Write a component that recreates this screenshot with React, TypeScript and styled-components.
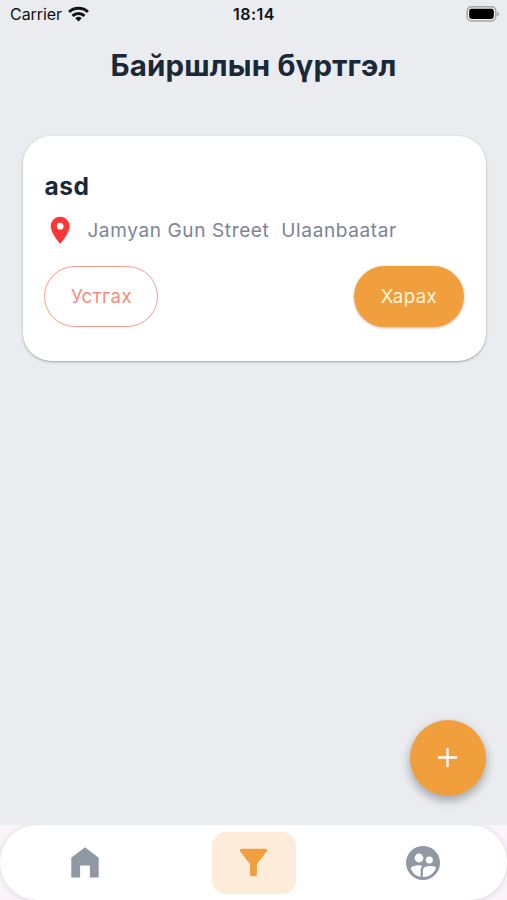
import React from "react";
import styled, { createGlobalStyle } from "styled-components";
import { MdFilterAlt, MdLocationOn } from "react-icons/md";

const GlobalStyle = createGlobalStyle`
  * { box-sizing: border-box; }
  body { margin: 0; background: #eaecef; }
  button { font: inherit; border: 0; background: none; padding: 0; cursor: pointer; }
  svg { display: block; }
`;

const Screen = styled.div`
  width: 507px;
  height: 900px;
  display: flex;
  flex-direction: column;
  overflow: hidden;
  background: #eaecef;
  color: #1b2838;
  font-family: Inter, "Noto Sans", sans-serif;
`;

const StatusBar = styled.header`
  height: 28px;
  flex: none;
  display: grid;
  grid-template-columns: 1fr auto 1fr;
  align-items: center;
  padding: 0 8px 0 10px;
  color: #111214;
  font-size: 16px;
  line-height: 28px;
`;

const Carrier = styled.div`
  display: flex;
  align-items: center;
  gap: 6px;
  letter-spacing: -0.05px;
`;

const Clock = styled.time`
  font-weight: 600;
  letter-spacing: 0.5px;
  margin-right: 1px;
`;

const Battery = styled.div`
  justify-self: end;
`;

const Title = styled.h1`
  margin: 17px 0 0;
  height: 40px;
  line-height: 40px;
  text-align: center;
  font-size: 29.5px;
  font-weight: 700;
  letter-spacing: 0.15px;
`;

const Content = styled.main`
  flex: 1;
  display: flex;
  flex-direction: column;
  padding: 51px 21.5px 29px 22.5px;
`;

const Card = styled.article`
  height: 225px;
  border-radius: 28px;
  background: #fff;
  padding: 34px 22px 0;
  box-shadow: 0 1px 3px rgba(35, 45, 55, 0.28), 0 1px 1px rgba(35, 45, 55, 0.12);
`;

const CardTitle = styled.h2`
  margin: 0;
  font-size: 24.5px;
  line-height: 32px;
  font-weight: 700;
  letter-spacing: 0.5px;
`;

const Address = styled.div`
  display: flex;
  align-items: center;
  height: 57px;
  gap: 11px;
  color: #7e8494;
  font-size: 19px;
  letter-spacing: 0.63px;
  white-space: pre;
  svg { color: #fd3737; margin-left: -0.5px; }
  span { padding-bottom: 1px; }
`;

const Actions = styled.div`
  display: flex;
  justify-content: space-between;
  margin: 7px 0 0 -0.5px;
`;

const ActionButton = styled.button<{ $filled?: boolean }>`
  && {
    width: ${({ $filled }) => ($filled ? 110 : 114)}px;
    height: 61px;
    padding: 0 0 2px 1px;
    border-radius: 31px;
    font-size: 18.5px;
    letter-spacing: 0.5px;
    color: ${({ $filled }) => ($filled ? "#fff4df" : "#fa897c")};
    background: ${({ $filled }) => ($filled ? "#f09f3c" : "#fff")};
    border: ${({ $filled }) => ($filled ? "0" : "1px solid #f99c8e")};
    box-shadow: ${({ $filled }) => ($filled ? "0 1px 3px rgba(0, 0, 0, 0.25)" : "none")};
  }
`;

const AddButton = styled.button`
  && {
    width: 76px;
    height: 76px;
    margin-top: auto;
    align-self: flex-end;
    display: grid;
    place-items: center;
    border-radius: 50%;
    background: #f09f3c;
    box-shadow: 0 5px 8px rgba(30, 40, 50, 0.26), 0 3px 12px rgba(30, 40, 50, 0.13);
  }
`;

const NavArea = styled.footer`
  height: 75px;
  flex: none;
  background: #fbf4fa;
`;

const NavBar = styled.nav`
  height: 75px;
  display: grid;
  grid-template-columns: repeat(3, 1fr);
  place-items: center;
  border-radius: 38px;
  background: #fff;
  box-shadow: 0 1px 7px rgba(40, 40, 50, 0.15);
  clip-path: inset(0 -8px);
`;

const NavItem = styled.button<{ $active?: boolean }>`
  && {
    width: 84px;
    height: 62px;
    display: grid;
    place-items: center;
    border-radius: 14px;
    color: ${({ $active }) => ($active ? "#f09f3c" : "#9098a4")};
    background: ${({ $active }) => ($active ? "#fdecd9" : "transparent")};
  }
`;

const WifiIcon = () => (
  <svg width="21" height="16" viewBox="0 0 21 16" fill="none" stroke="#111214" strokeWidth="3">
    <path d="M1.1 6C6.2 1 14.8 1 19.9 6" />
    <path d="M4.5 9.8C7.9 6.6 13.1 6.6 16.5 9.8" />
    <path d="M10.5 15.4 7.3 12.2C9.2 10.4 11.8 10.4 13.7 12.2Z" fill="#111214" stroke="none" />
  </svg>
);

const BatteryIcon = () => (
  <svg width="33" height="16" viewBox="0 0 33 16">
    <rect x="1.2" y=".8" width="28.6" height="14.2" rx="4.3" fill="none" stroke="#a5a6a8" strokeWidth="1.4" />
    <rect x="3.2" y="2.8" width="24.6" height="10.2" rx="2.4" fill="#000" />
    <path d="M31 5.8Q33 6.6 33 8T31 10.2Z" fill="#a5a6a8" />
  </svg>
);

const HomeIcon = () => (
  <svg width="28" height="31" viewBox="0 0 28 31">
    <path d="M14 .3 27.7 10.8V30.5H18.9V18.5H9.1V30.5H.3V10.8Z" fill="currentColor" />
  </svg>
);

const PeopleIcon = () => (
  <svg width="34" height="34" viewBox="0 0 34 34" fill="#fff">
    <circle cx="17" cy="17" r="17" fill="currentColor" />
    <circle cx="13" cy="12" r="4.4" />
    <circle cx="23.3" cy="14" r="3.6" />
    <path d="M4.6 22C7.2 19.4 12.3 18.6 16.7 19.9C15.2 21 14.6 22.2 14.6 23.8V30.8C9.8 30 6.2 26.9 4.6 22Z" />
    <path d="M16.9 31V24.2C16.9 19.9 26.3 18.9 30.1 21.6C28.5 27 23.7 31.2 16.9 31Z" />
  </svg>
);

const PlusIcon = () => (
  <svg width="20" height="20" viewBox="0 0 20 20" stroke="#fff" strokeWidth="2.3" strokeLinecap="round">
    <path d="M9.5 .8V18.2M.8 9.5H18.2" />
  </svg>
);

export default function App() {
  return (
    <>
      <GlobalStyle />
      <Screen>
        <StatusBar>
          <Carrier>Carrier <WifiIcon /></Carrier>
          <Clock>18:14</Clock>
          <Battery><BatteryIcon /></Battery>
        </StatusBar>
        <Title>Байршлын бүртгэл</Title>
        <Content>
          <Card>
            <CardTitle>asd</CardTitle>
            <Address>
              <MdLocationOn size={32.4} />
              <span>{"Jamyan Gun Street  Ulaanbaatar"}</span>
            </Address>
            <Actions>
              <ActionButton>Устгах</ActionButton>
              <ActionButton $filled>Харах</ActionButton>
            </Actions>
          </Card>
          <AddButton aria-label="Нэмэх"><PlusIcon /></AddButton>
        </Content>
        <NavArea>
          <NavBar>
            <NavItem><HomeIcon /></NavItem>
            <NavItem $active><MdFilterAlt size={41} /></NavItem>
            <NavItem><PeopleIcon /></NavItem>
          </NavBar>
        </NavArea>
      </Screen>
    </>
  );
}
